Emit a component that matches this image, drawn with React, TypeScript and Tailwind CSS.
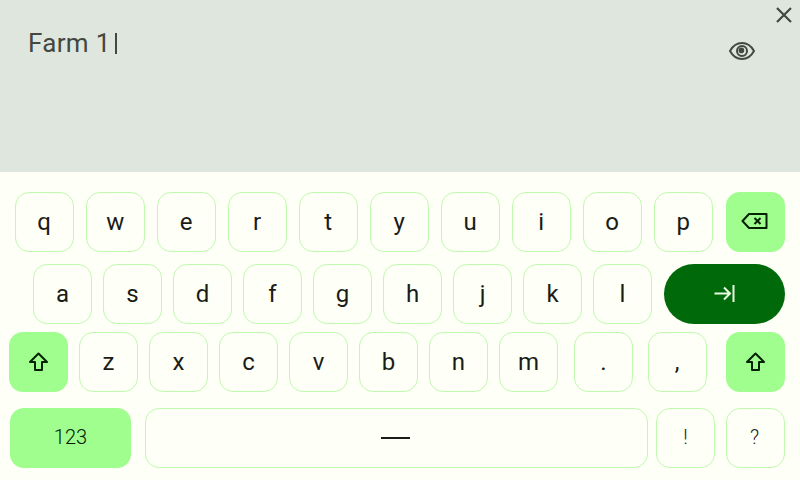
import type { ReactNode } from 'react'

const rowOne = ['q', 'w', 'e', 'r', 't', 'y', 'u', 'i', 'o', 'p']
const rowTwo = ['a', 's', 'd', 'f', 'g', 'h', 'j', 'k', 'l']
const rowThree = ['z', 'x', 'c', 'v', 'b', 'n', 'm']

function Key({ children, className = 'text-[24px]' }: { children: ReactNode; className?: string }) {
  return (
    <button className={`flex h-[60px] w-[59px] shrink-0 items-center justify-center rounded-[14px] border border-[#c0f9b0] text-[#1a1c18] ${className}`}>
      {children}
    </button>
  )
}

function ActionKey({ children, className = 'w-[59px]' }: { children: ReactNode; className?: string }) {
  return (
    <button className={`flex h-[60px] shrink-0 items-center justify-center rounded-[14px] bg-[#a0fe8f] text-[#062104] ${className}`}>
      {children}
    </button>
  )
}

function ShiftIcon() {
  return (
    <svg width="24" height="24" viewBox="0 0 24 24" fill="none" stroke="currentColor" strokeWidth="2" strokeLinejoin="round">
      <path d="M11.5 3.5 L20 12 H15 V20 H8 V12 H3 Z" />
    </svg>
  )
}

function BackspaceIcon() {
  return (
    <svg width="28" height="24" viewBox="0 0 28 24" fill="none" stroke="currentColor" strokeWidth="2" strokeLinejoin="round">
      <path d="M8 4 H25.5 V18 H8 L1.5 11 Z" />
      <path d="M13.5 8 L19.5 14 M19.5 8 L13.5 14" />
    </svg>
  )
}

function TabIcon() {
  return (
    <svg width="24" height="24" viewBox="0 0 24 24" fill="none" stroke="currentColor" strokeWidth="2">
      <path d="M1.5 11.5 H17 M11 5.5 L17 11.5 L11 17.5" />
      <path d="M20.5 3 V20" />
    </svg>
  )
}

function CloseIcon() {
  return (
    <svg width="24" height="24" viewBox="0 0 24 24" fill="none" stroke="currentColor" strokeWidth="2.2">
      <path d="M5 5 L19 19 M19 5 L5 19" />
    </svg>
  )
}

function EyeIcon() {
  return (
    <svg width="28" height="28" viewBox="0 0 28 28" fill="none" stroke="currentColor" strokeWidth="2">
      <path d="M2 14 C5 8.5 9 6 14 6 C19 6 23 8.5 26 14 C23 19.5 19 22 14 22 C9 22 5 19.5 2 14 Z" />
      <circle cx="14" cy="14" r="5" />
      <circle cx="13.4" cy="13.4" r="2.8" fill="currentColor" stroke="none" />
    </svg>
  )
}

export default function App() {
  return (
    <div className="flex h-[480px] w-[800px] flex-col overflow-hidden bg-[#fefff6] font-['Roboto',sans-serif]">
      <div className="relative h-[172px] shrink-0 bg-[#dfe6de] pl-[28px] pt-[25px] text-[#434840]">
        <p className="flex items-center text-[26px] leading-[36px] tracking-[0.3px]">
          Farm 1
          <span className="ml-[4px] h-[21px] w-[2px] bg-[#434840]" />
        </p>
        <span className="absolute left-[772px] top-[3px]">
          <CloseIcon />
        </span>
        <span className="absolute left-[728px] top-[37px]">
          <EyeIcon />
        </span>
      </div>

      <div className="mt-[20px] flex gap-[12px] pl-[14.7px]">
        {rowOne.map((k) => (
          <Key key={k}>{k}</Key>
        ))}
        <ActionKey className="w-[59px] translate-x-px">
          <BackspaceIcon />
        </ActionKey>
      </div>

      <div className="mt-[12px] flex gap-[11px] pl-[33px]">
        {rowTwo.map((k) => (
          <Key key={k}>{k}</Key>
        ))}
        <button className="ml-px flex h-[60px] w-[121px] items-center justify-center rounded-[30px] bg-[#006a0b] text-[#e8fbe0]">
          <TabIcon />
        </button>
      </div>

      <div className="mt-[8px] flex pl-[9px]">
        <ActionKey>
          <ShiftIcon />
        </ActionKey>
        <div className="ml-[11px] flex gap-[11px]">
          {rowThree.map((k) => (
            <Key key={k}>{k}</Key>
          ))}
        </div>
        <Key className="ml-[16px] text-[24px]">.</Key>
        <Key className="ml-[15px] pr-px text-[24px]">,</Key>
        <ActionKey className="ml-[19px] w-[59px]">
          <ShiftIcon />
        </ActionKey>
      </div>

      <div className="mt-[16px] flex pl-[10px]">
        <ActionKey className="w-[121px] pb-[2px] text-[20px] font-light">123</ActionKey>
        <Key className="ml-[14px] w-[503px] pr-[2px]">
          <span className="h-[2px] w-[29px] bg-[#1a1c18]" />
        </Key>
        <Key className="ml-[8px] pb-[2px] text-[20px] font-light">!</Key>
        <Key className="ml-[11px] pb-[2px] pr-[2px] text-[20px] font-light">?</Key>
      </div>
    </div>
  )
}
